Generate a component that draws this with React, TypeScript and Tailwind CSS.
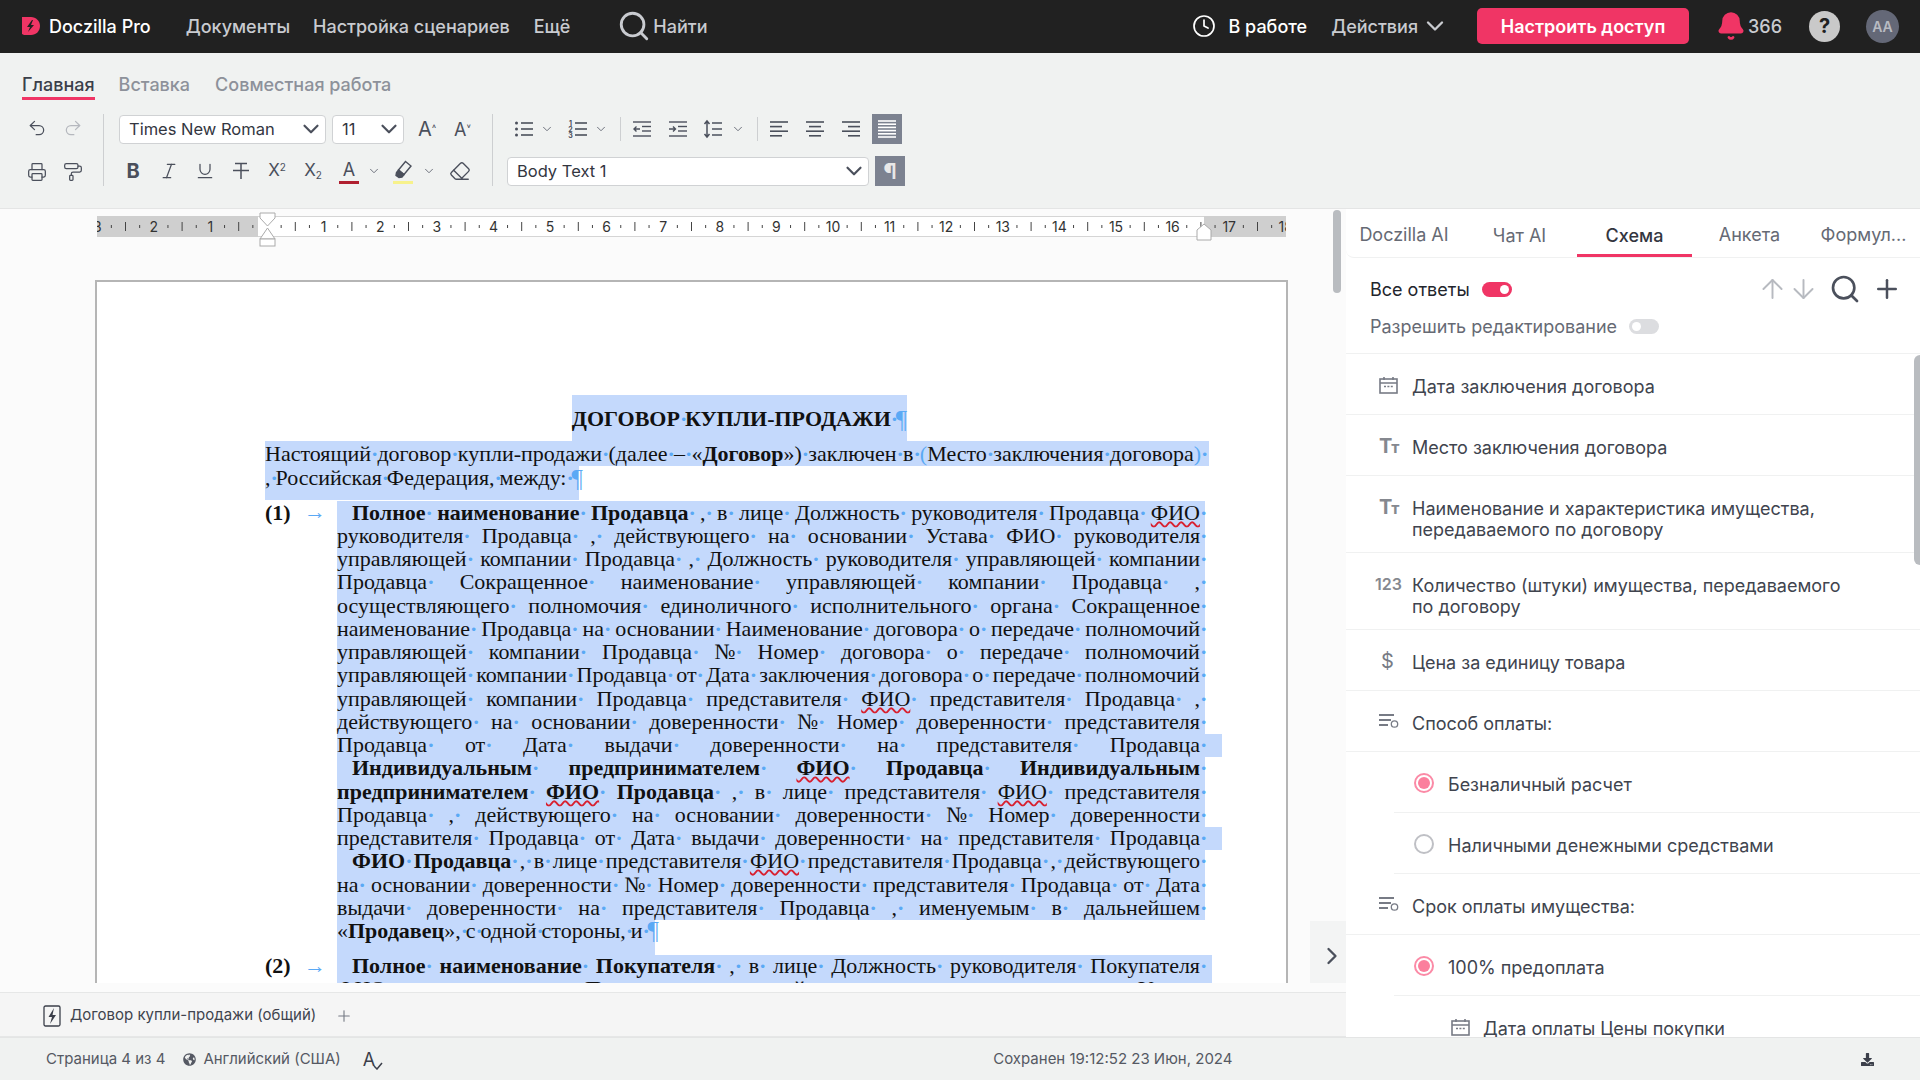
import { ReactNode } from "react";
import {
  ArrowDown,
  ArrowUp,
  Bell,
  ChevronDown,
  ChevronRight,
  Clock,
  Eraser,
  Italic,
  PaintRoller,
  Plus,
  Printer,
  Redo2,
  Search,
  Underline,
  Undo2,
} from "lucide-react";
import { FaDownload, FaGlobeAmericas } from "react-icons/fa";

const Lines = ({ rows }: { rows: number[][] }) => (
  <svg width="20" height="20" viewBox="0 0 20 20" stroke="#4b505c" strokeWidth="1.6">
    {rows.map((r, i) => (
      <line key={i} x1={r[0]} x2={r[1]} y1={3 + i * 4.6} y2={3 + i * 4.6} />
    ))}
  </svg>
);

const Logo = () => (
  <svg width="20" height="20" viewBox="0 0 20 20">
    <path d="M1 1h9c5 0 9 4 9 9s-4 9-9 9H3l-2-1z" fill="#f03565" />
    <path d="M11 4 6 11h3l-2 5 6-7h-3l2-5z" fill="#212121" />
  </svg>
);

const ListIcon = ({ numbered }: { numbered?: boolean }) => (
  <svg width="20" height="20" viewBox="0 0 20 20" stroke="#4b505c" strokeWidth="1.6" fill="#4b505c">
    <line x1="7" x2="19" y1="4" y2="4" />
    <line x1="7" x2="19" y1="10" y2="10" />
    <line x1="7" x2="19" y1="16" y2="16" />
    {numbered ? (
      <g stroke="none" fontSize="7" fontWeight="700" textAnchor="middle">
        <text x="2.5" y="6.5">1</text>
        <text x="2.5" y="12.5">2</text>
        <text x="2.5" y="18.5">3</text>
      </g>
    ) : (
      <>
        <circle cx="2.5" cy="4" r="1.5" stroke="none" />
        <circle cx="2.5" cy="10" r="1.5" stroke="none" />
        <circle cx="2.5" cy="16" r="1.5" stroke="none" />
      </>
    )}
  </svg>
);

const IndentIcon = ({ flip }: { flip?: boolean }) => (
  <svg width="20" height="20" viewBox="0 0 20 20" stroke="#4b505c" strokeWidth="1.4" fill="none">
    <line x1="1" x2="19" y1="3" y2="3" />
    <line x1="10" x2="19" y1="7.5" y2="7.5" />
    <line x1="10" x2="19" y1="12" y2="12" />
    <line x1="1" x2="19" y1="17" y2="17" />
    {flip ? <path d="M1 10h6M5 7.5 7.5 10 5 12.5" /> : <path d="M8 10H2M4.5 7.5 2 10l2.5 2.5" />}
  </svg>
);

const SpacingIcon = () => (
  <svg width="20" height="20" viewBox="0 0 20 20" stroke="#4b505c" strokeWidth="1.5" fill="none">
    <line x1="9" x2="19" y1="4" y2="4" />
    <line x1="9" x2="19" y1="10" y2="10" />
    <line x1="9" x2="19" y1="16" y2="16" />
    <path d="M4 2v16M1.5 5 4 2l2.5 3M1.5 15 4 18l2.5-3" />
  </svg>
);

const StrikeIcon = () => (
  <svg width="20" height="20" viewBox="0 0 20 20" stroke="#4b505c" strokeWidth="1.5" fill="none">
    <path d="M4 2.5h12M10 2.5V18M2 9.5h16" />
  </svg>
);

const MarkerIcon = () => (
  <svg width="20" height="22" viewBox="0 0 20 22" stroke="#4b505c" strokeWidth="1.4" fill="none">
    <path d="M12.5 2.5 18 7l-7 8.5-5.5-4.5z" />
    <path d="M5.5 11 11 15.5 9 18l-3 .5-3-2 .5-3z" fill="#4b505c" />
  </svg>
);

const CalendarIcon = () => (
  <svg width="19" height="19" viewBox="0 0 19 19" stroke="#777b85" strokeWidth="1.6" fill="none">
    <rect x="1" y="3" width="17" height="14" />
    <path d="M1 7h17M5 1v3M14 1v3" />
    <path d="M5 10.5h9" strokeDasharray="2 1.4" />
  </svg>
);

const ChoiceIcon = () => (
  <svg width="20" height="18" viewBox="0 0 20 18" stroke="#777b85" fill="none">
    <path d="M0 2h15M0 7h12M0 12h9" strokeWidth="2" />
    <circle cx="15.5" cy="11" r="3.2" strokeWidth="1.3" />
  </svg>
);

const TextIcon = () => (
  <span className="font-bold text-[#85888f] leading-none tracking-[-1px]">
    <span className="text-[20px]">T</span>
    <span className="text-[16px]">т</span>
  </span>
);

const Ruler = () => {
  const ticks: ReactNode[] = [];
  for (let i = -12; i <= 72; i++) {
    const x = 170 + i * 14.15;
    if (i === 0) continue;
    if (i % 4 === 0) {
      ticks.push(
        <text key={i} x={x} y="15.5" textAnchor="middle" fontSize="14" fill="#333">
          {Math.abs(i / 4)}
        </text>,
      );
    } else if (i % 2 === 0) {
      ticks.push(<line key={i} x1={x} x2={x} y1="6" y2="15" stroke="#444" />);
    } else {
      ticks.push(<line key={i} x1={x} x2={x} y1="9" y2="12" stroke="#444" />);
    }
  }
  return (
    <svg width="1189" height="21" viewBox="0 0 1189 21" className="overflow-visible block">
      <rect x="0" y="0" width="1189" height="21" fill="#fff" />
      <rect x="0" y="0" width="161" height="21" fill="#cfcfcf" />
      <rect x="1107" y="0" width="82" height="21" fill="#cfcfcf" />
      <line x1="161" x2="1107" y1="0.5" y2="0.5" stroke="#d5d5d5" />
      <line x1="161" x2="1107" y1="20.5" y2="20.5" stroke="#d5d5d5" />
      <svg x="0" y="0" width="1189" height="21">
        {ticks}
      </svg>
      <path d="M163 -3h15v5l-7.5 8-7.5-8zM163 23l7.5-11 7.5 11z" fill="#fff" stroke="#aaa" />
      <rect x="163" y="23" width="15" height="7" fill="#fff" stroke="#aaa" />
      <path d="M1100 14l7-6 7 6v10h-14z" fill="#fff" stroke="#aaa" />
    </svg>
  );
};

// word syntax: *bold*, ~ spelling error, {} blue brackets
const Word = ({ w }: { w: string }) => {
  const err = w.includes("~");
  const parts = w.replace("~", "").split("*");
  return (
    <span className="whitespace-pre">
      <span className={err ? "underline decoration-wavy decoration-[#d8202f] decoration-[1.5px] underline-offset-1" : ""}>
        {parts.map((p, i) => (
          <span key={i} className={i % 2 ? "font-bold" : ""}>
            {p.split(/([{}])/).map((s, j) =>
              s === "{" || s === "}" ? (
                <span key={j} className="text-[#5aa9f5]">
                  {s === "{" ? "(" : ")"}
                </span>
              ) : (
                s
              ),
            )}
          </span>
        ))}
      </span>
      <span className="inline-block w-[5px] text-center font-bold text-[#5aa9f5]">·</span>
    </span>
  );
};

const Pilcrow = () => <span className="text-[#5aa9f5] font-normal text-[25px] leading-none">¶</span>;

const Words = ({ t }: { t: string }) => (
  <>
    {t.split(" ").map((w, i) => (
      <Word key={i} w={w} />
    ))}
  </>
);

const Line = ({ t, indent, ext }: { t: string; indent?: boolean; ext?: boolean }) => (
  <div className={`h-[23.25px] bg-[#c4d9fc] flex ${ext ? "w-[885px]" : "w-[868px]"}`}>
    <div className={`w-[868px] pb-[1px] flex justify-between items-center ${indent ? "pl-[15px]" : ""}`}>
      <Words t={t} />
    </div>
  </div>
);

const Para1 = [
  "*Полное* *наименование* *Продавца* , в лице Должность руководителя Продавца ~ФИО",
  "руководителя Продавца , действующего на основании Устава ФИО руководителя",
  "управляющей компании Продавца , Должность руководителя управляющей компании",
  "Продавца Сокращенное наименование управляющей компании Продавца ,",
  "осуществляющего полномочия единоличного исполнительного органа Сокращенное",
  "наименование Продавца на основании Наименование договора о передаче полномочий",
  "управляющей компании Продавца № Номер договора о передаче полномочий",
  "управляющей компании Продавца от Дата заключения договора о передаче полномочий",
  "управляющей компании Продавца представителя ~ФИО представителя Продавца ,",
  "действующего на основании доверенности № Номер доверенности представителя",
  "Продавца от Дата выдачи доверенности на представителя Продавца",
  "*Индивидуальным* *предпринимателем* ~*ФИО* *Продавца* *Индивидуальным*",
  "*предпринимателем* ~*ФИО* *Продавца* , в лице представителя ~ФИО представителя",
  "Продавца , действующего на основании доверенности № Номер доверенности",
  "представителя Продавца от Дата выдачи доверенности на представителя Продавца",
  "*ФИО* *Продавца* , в лице представителя ~ФИО представителя Продавца , действующего",
  "на основании доверенности № Номер доверенности представителя Продавца от Дата",
  "выдачи доверенности на представителя Продавца , именуемым в дальнейшем",
];

const Label = ({ n }: { n: string }) => (
  <div className="w-[72px] shrink-0 flex h-[23.25px] pb-[1px] items-center font-bold">
    <span className="w-[39px]">{n}</span>
    <span className="text-[#5aa9f5] font-normal leading-none">→</span>
  </div>
);

const Page = () => (
  <div className="ml-[-2px] mt-[43px] w-[1193px] border-2 border-[#b5b5b5] bg-white pl-[168px] pt-[113px] pb-[100px] font-['Liberation_Serif',serif] text-[22px] text-[#111] leading-[23.25px]">
    <div className="w-[949px] flex justify-center">
      <div className="h-[46px] bg-[#c4d9fc] flex items-center pt-[2px] font-bold">
        <Words t="ДОГОВОР КУПЛИ-ПРОДАЖИ" />
        <Pilcrow />
      </div>
    </div>
    <div className="w-[944px] h-[25px] bg-[#c4d9fc] flex justify-between items-center pr-[3px]">
      <Words t="Настоящий договор купли-продажи (далее – «*Договор*») заключен в {Место заключения договора}" />
    </div>
    <div className="w-[314px] h-[34px] bg-[#c4d9fc] flex">
      <div className="flex h-[24px] items-center">
        <Words t=", Российская Федерация, между:" />
        <Pilcrow />
      </div>
    </div>
    <div className="flex pt-[1px]">
      <Label n="(1)" />
      <div>
        {Para1.map((t, i) => (
          <Line key={i} t={t} indent={i === 0 || i === 11 || i === 15} ext={i === 10 || i === 14} />
        ))}
        <div className="w-[318px] h-[35px] bg-[#c4d9fc]">
          <div className="flex h-[22px] items-center">
            <Words t="«*Продавец*», с одной стороны, и" />
            <Pilcrow />
          </div>
        </div>
      </div>
    </div>
    <div className="flex">
      <Label n="(2)" />
      <div>
        <div className="w-[875px] bg-[#c4d9fc]">
          <Line t="*Полное* *наименование* *Покупателя* , в лице Должность руководителя Покупателя" indent />
        </div>
        <div className="w-[875px] bg-[#c4d9fc]">
          <Line t="ФИО руководителя Покупателя , действующего на основании Устава" />
        </div>
      </div>
    </div>
  </div>
);

const Field = ({ icon, children, indent = 0, border = true }: { icon: ReactNode; children: ReactNode; indent?: 0 | 1 | 2; border?: boolean }) => (
  <div className={indent ? "pl-[48px]" : ""}>
    <div
      className={`flex min-h-[61px] border-[#f0f1f1] ${border ? "border-b" : ""} ${
        indent === 0 ? "pl-[33px]" : indent === 1 ? "pl-[20px]" : "pl-[57px]"
      } pt-[22px] pb-[12px]`}
    >
      <div className={`${indent === 1 ? "w-[34px]" : indent === 2 ? "w-[32px]" : "w-[33px]"} shrink-0 h-[18px] flex items-center`}>{icon}</div>
      <div className="text-[18px] leading-[21px] text-[#40444e]">{children}</div>
    </div>
  </div>
);

const Radio = ({ on }: { on?: boolean }) => (
  <span
    className={`w-[20px] h-[20px] shrink-0 rounded-full border-2 flex items-center justify-center ${
      on ? "border-[#fb8aa6]" : "border-[#bfc0c5]"
    }`}
  >
    {on && <span className="w-[12px] h-[12px] rounded-full bg-[#fb7f9d]" />}
  </span>
);

const Toggle = ({ on }: { on?: boolean }) => (
  <span className={`w-[30px] h-[15px] rounded-full flex items-center px-[3px] ${on ? "bg-[#f03565] justify-end" : "bg-[#dcdde0]"}`}>
    <span className="w-[9px] h-[9px] rounded-full bg-white" />
  </span>
);

const Chev = () => <ChevronDown size={14} strokeWidth={1.6} color="#666b76" className="shrink-0" />;

const Select = ({ label, width }: { label: string; width: string }) => (
  <div className={`${width} h-[29px] bg-white border border-[#d0d2d4] rounded-[4px] flex items-center justify-between pl-[9px] pr-[1px] text-[16.5px]`}>
    {label}
    <ChevronDown size={26} strokeWidth={2} color="#4b505c" />
  </div>
);

export default function App() {
  const ic = { size: 20, strokeWidth: 1.5, color: "#4b505c" };
  return (
    <div className="w-[1920px] h-[1080px] overflow-hidden flex flex-col font-['Inter',sans-serif] bg-white">
      <header className="h-[53px] shrink-0 bg-[#212121] flex items-center pb-[1px] text-[18px] font-medium text-[#c9cbd0]">
        <div className="ml-[21px] flex items-center gap-[8px] text-white">
          <Logo />
          <span>Doczilla Pro</span>
        </div>
        <span className="ml-[35px]">Документы</span>
        <span className="ml-[23px]">Настройка сценариев</span>
        <span className="ml-[24px]">Ещё</span>
        <Search size={34} strokeWidth={2} color="#c9cbd0" className="ml-[47px]" />
        <span className="ml-[2px]">Найти</span>
        <div className="ml-auto flex items-center">
          <Clock size={24} strokeWidth={1.7} color="#fff" />
          <span className="ml-[12px] text-white">В работе</span>
          <span className="ml-[24px]">Действия</span>
          <ChevronDown size={28} strokeWidth={2} color="#c9cbd0" className="ml-[3px]" />
          <button className="ml-[28px] w-[212px] h-[36px] rounded-[5px] bg-[#f03565] text-white font-semibold">Настроить доступ</button>
          <Bell size={30} fill="#f03565" color="#f03565" className="ml-[27px]" />
          <span className="ml-[2px]">366</span>
          <span className="ml-[27px] w-[31px] h-[31px] rounded-full bg-[#c9c9c9] text-[#212121] font-bold text-[20px] flex items-center justify-center">?</span>
          <span className="ml-[26px] mr-[21px] w-[33px] h-[33px] rounded-full bg-[#646877] text-[#b8bbc2] text-[14px] font-semibold flex items-center justify-center">АА</span>
        </div>
      </header>

      <section className="h-[156px] shrink-0 bg-[#f0f2f1] border-b border-[#e4e5e5]">
        <div className="flex gap-[24px] pl-[22px] pt-[18px] text-[18px] font-medium text-[#8d919a]">
          <span className="text-[#3b3f4a] h-[29px] border-b-[3px] border-[#f03565]">Главная</span>
          <span>Вставка</span>
          <span className="ml-[1px]">Совместная работа</span>
        </div>
        <div className="flex mt-[14px] h-[72px] text-[#33363f]">
          <div className="w-[104px] border-r border-[#cdcfd1] flex flex-col justify-between pl-[27px] py-[4px]">
            <div className="flex gap-[16px]">
              <Undo2 {...ic} />
              <Redo2 {...ic} color="#b5b8be" />
            </div>
            <div className="flex gap-[16px]">
              <Printer {...ic} />
              <PaintRoller {...ic} />
            </div>
          </div>
          <div className="w-[389px] border-r border-[#cdcfd1] pl-[15px] flex flex-col justify-between">
            <div className="flex items-center">
              <Select label="Times New Roman" width="w-[207px]" />
              <span className="w-[6px]" />
              <Select label="11" width="w-[72px]" />
              <span className="ml-[14px] w-[20px] text-[20px] text-[#4b505c]">
                A<sup className="text-[10px]">˄</sup>
              </span>
              <span className="ml-[16px] w-[20px] text-[18px] text-[#4b505c]">
                A<sup className="text-[10px]">˅</sup>
              </span>
            </div>
            <div className="flex items-center gap-[16px] pl-[4px] h-[30px] text-[#4b505c]">
              <span className="w-[20px] text-center text-[20px] font-bold">B</span>
              <Italic {...ic} />
              <Underline {...ic} />
              <StrikeIcon />
              <span className="w-[20px] text-center text-[17px]">
                X<sup className="text-[10px]">2</sup>
              </span>
              <span className="w-[20px] text-center text-[17px]">
                X<sub className="text-[10px]">2</sub>
              </span>
              <div className="flex items-center w-[38px]">
                <span className="w-[20px] shrink-0 text-center border-b-[3px] border-[#b02030] leading-[22px] text-[18px]">A</span>
                <span className="ml-[8px]">
                  <Chev />
                </span>
              </div>
              <div className="flex items-center w-[40px]">
                <span className="w-[20px] shrink-0 border-b-[3px] border-[#f7f28c] h-[25px]">
                  <MarkerIcon />
                </span>
                <span className="ml-[9px]">
                  <Chev />
                </span>
              </div>
              <Eraser size={22} strokeWidth={1.5} color="#4b505c" />
            </div>
          </div>
          <div className="pl-[14px] flex flex-col justify-between">
            <div className="flex items-center h-[30px]">
              <div className="flex items-center w-[54px] ml-[7px] gap-[6px]">
                <ListIcon />
                <Chev />
              </div>
              <div className="flex items-center w-[52px] gap-[6px]">
                <ListIcon numbered />
                <Chev />
              </div>
              <div className="w-px h-[24px] bg-[#cdcfd1] mr-[11px]" />
              <IndentIcon />
              <span className="w-[16px]" />
              <IndentIcon flip />
              <span className="w-[15px]" />
              <SpacingIcon />
              <span className="w-[8px]" />
              <Chev />
              <div className="w-px h-[24px] bg-[#cdcfd1] ml-[12px] mr-[11px]" />
              <Lines rows={[[1, 19], [1, 13], [1, 19], [1, 13]]} />
              <span className="ml-[16px]">
                <Lines rows={[[1, 19], [4, 16], [1, 19], [4, 16]]} />
              </span>
              <span className="ml-[16px]">
                <Lines rows={[[1, 19], [7, 19], [1, 19], [7, 19]]} />
              </span>
              <span className="ml-[11px] w-[30px] h-[30px] bg-[#7c8290] flex items-center justify-center">
                <svg width="20" height="20" viewBox="0 0 20 20" stroke="#fff" strokeWidth="1.6">
                  {[2, 5.2, 8.4, 11.6, 14.8, 18].map((y) => (
                    <line key={y} x1="1" x2="19" y1={y} y2={y} />
                  ))}
                </svg>
              </span>
            </div>
            <div className="flex items-center">
              <Select label="Body Text 1" width="w-[362px]" />
              <span className="ml-[6px] w-[30px] h-[30px] bg-[#7c8290] text-[#e8e8e8] font-bold text-[22px] flex items-center justify-center">¶</span>
            </div>
          </div>
        </div>
      </section>

      <div className="h-[828px] shrink-0 flex">
        <div className="w-[1346px] shrink-0 flex flex-col">
          <div className="h-[774px] shrink-0 relative overflow-hidden bg-[#fbfbfb] pl-[97px] pt-[7px]">
            <Ruler />
            <Page />
            <div className="absolute left-[1333px] top-[1px] w-[8px] h-[83px] rounded-full bg-[#b9bcc0]" />
            <div className="absolute left-[1310px] top-[712px] w-[36px] h-[62px] bg-[#f3f4f4] flex items-center justify-center pt-[8px] pl-[8px]">
              <ChevronRight size={28} strokeWidth={2} color="#4b505c" />
            </div>
          </div>
          <div className="h-[9px] shrink-0 bg-[#fbfbfb]" />
          <div className="flex-1 bg-[#f5f5f5] border-y border-[#e6e7e7] flex items-center pl-[43px] pt-[2px] text-[15px] text-[#40444e]">
            <svg width="18" height="22" viewBox="0 0 18 22" fill="none" stroke="#3b3f4a" strokeWidth="1.3">
              <rect x="1" y="1" width="16" height="20" rx="1.5" />
              <path d="M11 3 5.5 12H9l-2 7 6-9H9.5z" fill="#3b3f4a" stroke="none" />
            </svg>
            <span className="ml-[9px]">Договор купли-продажи (общий)</span>
            <Plus size={18} strokeWidth={1.5} color="#777b85" className="ml-[19px]" />
          </div>
        </div>

        <aside className="flex-1 bg-white relative overflow-hidden">
          <div className="grid grid-cols-[116px_115px_115px_115px_113px] h-[49px] border-b border-[#f0f1f1] rounded-bl-[8px] text-[18px] text-[#666a74] text-center">
            <span className="pt-[12px]">Doczilla AI</span>
            <span className="pt-[13px]">Чат AI</span>
            <span className="pt-[13px] text-[#33363f] font-medium border-b-[3px] border-[#f03565]">Схема</span>
            <span className="pt-[12px]">Анкета</span>
            <span className="pt-[12px]">Формул...</span>
          </div>
          <div className="h-[96px] border-b border-[#f0f1f1] pl-[24px] pt-[15px]">
            <div className="flex items-center h-[32px] gap-[12px] text-[18px] text-[#22252c]">
              Все ответы
              <Toggle on />
              <div className="ml-auto flex items-center pr-[17px]">
                <span className="w-[31px] flex justify-center">
                  <ArrowUp size={32} strokeWidth={1.5} color="#b7bac0" />
                </span>
                <span className="w-[31px] flex justify-center">
                  <ArrowDown size={32} strokeWidth={1.5} color="#b7bac0" />
                </span>
                <span className="w-[52px] flex justify-center">
                  <Search size={32} strokeWidth={2} color="#4b505c" />
                </span>
                <span className="w-[32px] flex justify-center">
                  <Plus size={30} strokeWidth={2} color="#4b505c" />
                </span>
              </div>
            </div>
            <div className="flex items-center mt-[8px] gap-[12px] text-[18px] text-[#666a74]">
              Разрешить редактирование
              <Toggle />
            </div>
          </div>
          <Field icon={<CalendarIcon />}>Дата заключения договора</Field>
          <Field icon={<TextIcon />}>Место заключения договора</Field>
          <Field icon={<TextIcon />}>
            Наименование и характеристика имущества,
            <br />
            передаваемого по договору
          </Field>
          <Field icon={<span className="ml-[-4px] text-[16px] font-semibold text-[#85888f]">123</span>}>
            Количество (штуки) имущества, передаваемого
            <br />
            по договору
          </Field>
          <Field icon={<span className="ml-[2px] text-[20px] text-[#777b85]">$</span>}>Цена за единицу товара</Field>
          <Field icon={<ChoiceIcon />}>Способ оплаты:</Field>
          <Field indent={1} icon={<Radio on />}>
            Безналичный расчет
          </Field>
          <Field indent={1} icon={<Radio />}>
            Наличными денежными средствами
          </Field>
          <Field icon={<ChoiceIcon />}>Срок оплаты имущества:</Field>
          <Field indent={1} icon={<Radio on />}>
            100% предоплата
          </Field>
          <Field indent={2} icon={<CalendarIcon />} border={false}>
            Дата оплаты Цены покупки
          </Field>
          <div className="absolute right-0 top-[146px] w-[6px] h-[210px] rounded-l-full bg-[#b9bcc0]" />
        </aside>
      </div>

      <footer className="flex-1 bg-[#f0f2f1] border-t border-[#e4e5e5] flex items-center pt-[1px] text-[15px] text-[#555963]">
        <span className="ml-[46px]">Страница 4 из 4</span>
        <FaGlobeAmericas size={13} color="#555963" className="ml-[18px]" />
        <span className="ml-[7px]">Английский (США)</span>
        <span className="ml-[22px] text-[#3b3f4a] text-[18px] relative">
          A
          <svg width="10" height="8" viewBox="0 0 10 8" className="absolute left-[10px] top-[16px]" stroke="#3b3f4a" strokeWidth="1.5" fill="none">
            <path d="M1 4l3 3 5-6" />
          </svg>
        </span>
        <span className="ml-[618px]">Сохранен 19:12:52 23 Июн, 2024</span>
        <FaDownload size={13} color="#3b3f4a" className="ml-auto mr-[46px]" />
      </footer>
    </div>
  );
}
